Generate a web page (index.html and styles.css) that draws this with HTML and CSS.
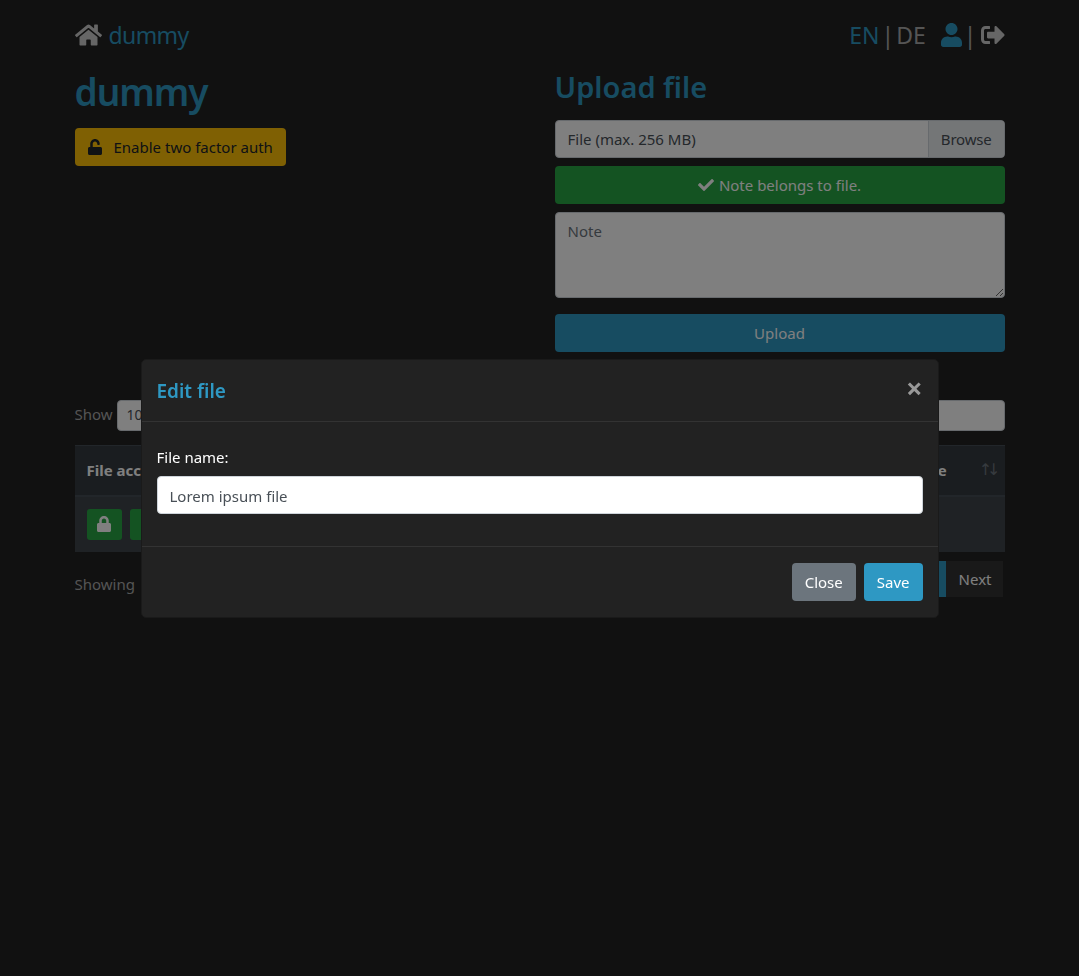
FILE: index.html
```html
<!DOCTYPE html>
<html lang="en">
<head>
    <meta charset="UTF-8">
    <title>dummy</title>
    <link rel="stylesheet" href="styles.css">
</head>
<body>
<div class="container">
    <div class="topbar">
        <a class="brand">
            <svg class="icon home-icon" viewBox="0 0 576 512"><path d="M280.37 148.26L96 300.11V464a16 16 0 0 0 16 16l112.06-.29a16 16 0 0 0 15.92-16V368a16 16 0 0 1 16-16h64a16 16 0 0 1 16 16v95.64a16 16 0 0 0 16 16.05L464 480a16 16 0 0 0 16-16V300L295.67 148.26a12.19 12.19 0 0 0-15.3 0zM571.6 251.47L488 182.56V44.05a12 12 0 0 0-12-12h-56a12 12 0 0 0-12 12v72.61L318.47 43a48 48 0 0 0-61 0L4.34 251.47a12 12 0 0 0-1.6 16.9l25.5 31A12 12 0 0 0 45.15 301l235.22-193.74a12.19 12.19 0 0 1 15.3 0L530.9 301a12 12 0 0 0 16.9-1.6l25.5-31a12 12 0 0 0-1.7-16.93z"/></svg>
            <span class="brand-name">dummy</span>
        </a>
        <div class="top-links">
            <span class="link-blue">EN</span><span class="sep">|</span><span class="link-gray">DE</span>
            <svg class="icon user-icon" viewBox="0 0 448 512"><path d="M224 256c70.7 0 128-57.3 128-128S294.7 0 224 0 96 57.3 96 128s57.3 128 128 128zm89.6 32h-16.7c-22.2 10.2-46.9 16-72.9 16s-50.6-5.8-72.9-16h-16.7C60.2 288 0 348.2 0 422.4V464c0 26.5 21.5 48 48 48h352c26.5 0 48-21.5 48-48v-41.6c0-74.2-60.2-134.4-134.4-134.4z"/></svg>
            <span class="sep sep-icon">|</span>
            <svg class="icon out-icon" viewBox="0 0 512 512"><path d="M497 273L329 441c-15 15-41 4.5-41-17v-96H152c-13.3 0-24-10.7-24-24v-96c0-13.3 10.7-24 24-24h136V88c0-21.4 25.9-32 41-17l168 168c9.3 9.4 9.3 24.6 0 34zM192 436v-40c0-6.6-5.4-12-12-12H96c-17.7 0-32-14.3-32-32V160c0-17.7 14.3-32 32-32h84c6.6 0 12-5.4 12-12V76c0-6.6-5.4-12-12-12H96c-53 0-96 43-96 96v192c0 53 43 96 96 96h84c6.6 0 12-5.4 12-12z"/></svg>
        </div>
    </div>

    <div class="row">
        <div class="col">
            <h1>dummy</h1>
            <a class="btn btn-warning btn-auth">
                <svg class="icon unlock-icon" viewBox="0 0 448 512"><path d="M400 256H152V152.9c0-39.6 31.7-72.5 71.3-72.9 40-.4 72.7 32.1 72.7 72v16c0 13.3 10.7 24 24 24h32c13.3 0 24-10.7 24-24v-16C376 68 307.5-.3 223.5 0 139.5.3 72 69.5 72 153.5V256H48c-26.5 0-48 21.5-48 48v160c0 26.5 21.5 48 48 48h352c26.5 0 48-21.5 48-48V304c0-26.5-21.5-48-48-48z"/></svg>
                Enable two factor auth
            </a>
        </div>
        <div class="col upload">
            <h2>Upload file</h2>
            <div class="file-input">
                <span class="file-label">File (max. 256 MB)</span>
                <span class="file-browse">Browse</span>
            </div>
            <a class="btn btn-success btn-block">
                <svg class="icon check-icon" viewBox="0 0 512 512"><path d="M173.898 439.404l-166.4-166.4c-9.997-9.997-9.997-26.206 0-36.204l36.203-36.204c9.997-9.998 26.207-9.998 36.204 0L192 312.69 432.095 72.596c9.997-9.997 26.207-9.997 36.204 0l36.203 36.204c9.997 9.997 9.997 26.206 0 36.204l-294.4 294.401c-9.998 9.997-26.207 9.997-36.204-.001z"/></svg>
                Note belongs to file.
            </a>
            <textarea class="note" placeholder="Note"></textarea>
            <a class="btn btn-primary btn-block">Upload</a>
        </div>
    </div>

    <div class="table-tools">
        <label class="length">Show <span class="select">10</span></label>
        <span class="search"></span>
    </div>

    <table class="files">
        <thead>
            <tr>
                <th class="col-access">File access</th>
                <th>File name</th>
                <th class="col-size">Size <span class="sort">↑↓</span></th>
            </tr>
        </thead>
        <tbody>
            <tr>
                <td>
                    <div class="access-btns">
                        <span class="btn-small"><svg class="icon lock-icon" viewBox="0 0 448 512"><path d="M400 224h-24v-72C376 68.2 307.8 0 224 0S72 68.2 72 152v72H48c-26.5 0-48 21.5-48 48v192c0 26.5 21.5 48 48 48h352c26.5 0 48-21.5 48-48V272c0-26.5-21.5-48-48-48zm-104 0H152v-72c0-39.7 32.3-72 72-72s72 32.3 72 72v72z"/></svg></span>
                        <span class="btn-small"></span>
                    </div>
                </td>
                <td></td>
                <td></td>
            </tr>
        </tbody>
    </table>

    <div class="table-foot">
        <span class="info">Showing 1 to 1 of 1 entries</span>
        <div class="pagination">
            <span class="page page-active">1</span>
            <span class="page page-next">Next</span>
        </div>
    </div>
</div>

<div class="backdrop">
    <div class="modal">
        <div class="modal-header">
            <h5>Edit file</h5>
            <span class="close">×</span>
        </div>
        <div class="modal-body">
            <label class="field-label">File name:</label>
            <input class="field" type="text" value="Lorem ipsum file">
        </div>
        <div class="modal-footer">
            <a class="btn btn-secondary">Close</a>
            <a class="btn btn-primary">Save</a>
        </div>
    </div>
</div>
</body>
</html>
```

FILE: styles.css
```css
* {
    box-sizing: border-box;
}

body {
    margin: 0;
    background-color: #222;
    color: #aaa;
    font-family: "Noto Sans", "Open Sans", sans-serif;
    font-size: 15px;
    line-height: 24px;
}

.container {
    width: 960px;
    margin: 0 auto;
    padding: 17px 15px 0;
}

.icon {
    fill: currentColor;
    display: block;
    flex: none;
}

/* top bar */
.topbar {
    height: 36px;
    display: flex;
    justify-content: space-between;
    align-items: center;
    font-size: 23px;
}

.brand {
    display: flex;
    align-items: center;
    gap: 7px;
    color: #2e98c3;
}

.brand-name {
    letter-spacing: -0.6px;
}

.home-icon {
    width: 27px;
    height: 24px;
    color: #ccc;
}

.top-links {
    display: flex;
    align-items: center;
    color: #aaa;
}

.link-blue {
    color: #2e98c3;
}

.link-gray {
    color: #aaa;
}

.sep {
    color: #aaa;
    margin: 0 2px;
}

.sep-icon {
    margin: 0 4px 0 2px;
}

.user-icon {
    width: 21px;
    height: 24px;
    color: #2e98c3;
    margin-left: 15px;
}

.out-icon {
    width: 24px;
    height: 24px;
    color: #ccc;
}

/* two columns */
.row {
    display: flex;
    margin-top: 15px;
    margin-bottom: 48px;
}

.col {
    width: 480px;
}

.upload {
    width: 450px;
    display: flex;
    flex-direction: column;
}

h1 {
    margin: 0 0 12px;
    font-size: 37px;
    line-height: 48px;
    font-weight: 600;
    letter-spacing: -1px;
    color: #2e98c3;
}

h2 {
    margin: 0 0 14px;
    font-size: 29px;
    line-height: 38px;
    font-weight: 600;
    color: #2e98c3;
}

.btn {
    height: 38px;
    display: inline-flex;
    align-items: center;
    justify-content: center;
    padding: 0 13px;
    border-radius: 4px;
    color: #fff;
}

.btn-block {
    display: flex;
}

.btn-warning {
    background-color: #ffc107;
    color: #212529;
}

.btn-success {
    background-color: #28a745;
    margin-bottom: 8px;
    gap: 5px;
}

.btn-primary {
    background-color: #2e98c3;
}

.btn-secondary {
    background-color: #6c757d;
}

.btn-auth {
    gap: 12px;
}

.unlock-icon {
    width: 14px;
    height: 16px;
}

.check-icon {
    width: 16px;
    height: 16px;
}

.file-input {
    height: 38px;
    display: flex;
    background-color: #fff;
    border: 1px solid #ced4da;
    border-radius: 4px;
    margin-bottom: 8px;
    color: #495057;
    overflow: hidden;
}

.file-label {
    flex: 1;
    padding: 6px 12px;
}

.file-browse {
    padding: 6px 12px;
    background-color: #e9ecef;
    border-left: 1px solid #ced4da;
    letter-spacing: -0.2px;
}

.note {
    display: block;
    width: 100%;
    height: 86px;
    margin: 0 0 16px;
    padding: 6px 12px;
    background-color: #fff;
    border: 1px solid #ced4da;
    border-radius: 4px;
    color: #495057;
    font: inherit;
}

.note::placeholder {
    color: #6c757d;
    opacity: 1;
}

/* table */
.table-tools {
    height: 31px;
    display: flex;
    justify-content: space-between;
    align-items: center;
    margin-bottom: 14px;
}

.length {
    display: flex;
    align-items: flex-start;
    gap: 4px;
    line-height: 28px;
}

.select {
    width: 75px;
    height: 31px;
    padding: 2px 9px;
    background-color: #fff;
    border: 1px solid #ced4da;
    border-radius: 4px;
    color: #495057;
    font-size: 14px;
    line-height: 24px;
}

.search {
    width: 200px;
    height: 31px;
    background-color: #fff;
    border: 1px solid #ced4da;
    border-radius: 4px;
}

.files {
    width: 100%;
    border-collapse: collapse;
    table-layout: fixed;
}

.files th {
    height: 50px;
    padding: 0 12px;
    background-color: #343a40;
    border-top: 1px solid #454d55;
    border-bottom: 2px solid #454d55;
    text-align: left;
    font-weight: 700;
    color: #fff;
}

.col-access {
    width: 300px;
}

.col-size {
    width: 99px;
}

.sort {
    float: right;
    margin-right: -3px;
    font-family: "DejaVu Sans", sans-serif;
    font-size: 16px;
    font-weight: 400;
    letter-spacing: -5px;
    color: #6c757d;
}

.files td {
    height: 56px;
    padding: 0 12px;
    background-color: #3e444a;
}

.access-btns {
    display: flex;
    gap: 8px;
}

.btn-small {
    width: 35px;
    height: 31px;
    display: flex;
    align-items: center;
    justify-content: center;
    background-color: #28a745;
    border-radius: 3px;
    color: #fff;
}

.lock-icon {
    width: 14px;
    height: 16px;
}

.table-foot {
    display: flex;
    justify-content: space-between;
    align-items: flex-start;
    margin-top: 9px;
    padding-right: 2px;
}

.info {
    margin-top: 11px;
    word-spacing: 3px;
}

.pagination {
    display: flex;
}

.page {
    height: 36px;
    padding: 6px 12px;
    background-color: #333;
    color: #fff;
}

.page-next {
    padding-left: 13px;
    padding-right: 11px;
}

.page-active {
    background-color: #2e98c3;
}

/* modal */
.backdrop {
    position: fixed;
    top: 0;
    right: 0;
    bottom: 0;
    left: 0;
    display: flex;
    align-items: center;
    justify-content: center;
    background-color: rgba(0, 0, 0, 0.5);
}

.modal {
    width: 798px;
    background-color: #222;
    border: 1px solid #1a1a1a;
    border-radius: 5px;
    color: #fff;
}

.modal-header {
    height: 62px;
    display: flex;
    justify-content: space-between;
    align-items: center;
    padding: 2px 15px 0;
    border-bottom: 1px solid #333;
}

h5 {
    margin: 0;
    font-size: 19px;
    font-weight: 600;
    color: #2e98c3;
}

.close {
    margin-bottom: 6px;
    font-size: 29px;
    font-weight: 700;
    color: #999;
}

.modal-body {
    height: 124px;
    padding: 23px 15px 0;
}

.field-label {
    display: block;
    margin-bottom: 7px;
}

.field {
    display: block;
    width: 100%;
    height: 38px;
    padding: 7px 12px 5px;
    background-color: #fff;
    border: 1px solid #ced4da;
    border-radius: 4px;
    color: #495057;
    font: inherit;
}

.modal-footer {
    height: 71px;
    display: flex;
    justify-content: flex-end;
    align-items: center;
    gap: 8px;
    padding: 0 15px;
    border-top: 1px solid #333;
}
```
